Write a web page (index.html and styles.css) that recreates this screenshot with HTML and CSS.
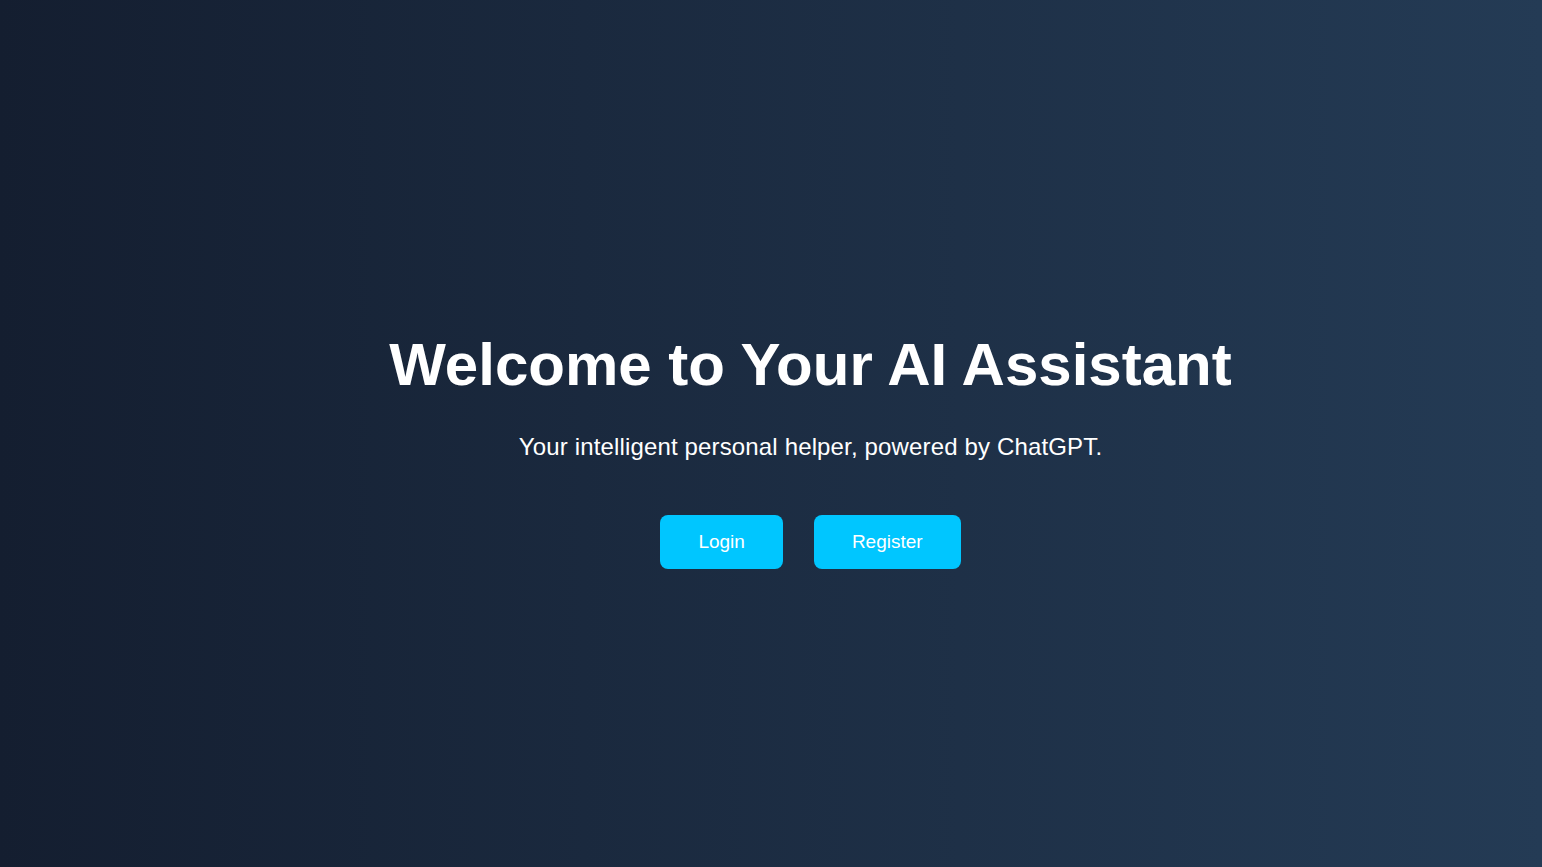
FILE: index.html
```html
<!DOCTYPE html>
<html lang="en">
<head>
<meta charset="utf-8">
<title>AI Assistant</title>
<link rel="stylesheet" href="styles.css">
</head>
<body>
<main class="hero">
  <h1 class="title">Welcome to Your AI Assistant</h1>
  <p class="subtitle">Your intelligent personal helper, powered by ChatGPT.</p>
  <div class="actions">
    <a class="btn" href="#">Login</a>
    <a class="btn" href="#">Register</a>
  </div>
</main>
</body>
</html>
```
FILE: styles.css
```css
html, body {
  margin: 0;
  height: 100%;
}
body {
  background: linear-gradient(to right, #141e30, #243b55);
  color: #ffffff;
  font-family: "Liberation Sans", Arial, sans-serif;
}
.hero {
  box-sizing: border-box;
  height: 100%;
  padding: 32px 0 0 79px;
  display: flex;
  flex-direction: column;
  align-items: center;
  justify-content: center;
  text-align: center;
}
.title {
  font-size: 60px;
  line-height: 70px;
  font-weight: bold;
  margin: 0 0 33px;
}
.subtitle {
  font-size: 24px;
  line-height: 28px;
  letter-spacing: 0.15px;
  margin: 0 0 54px;
}
.actions {
  display: flex;
  gap: 31px;
}
.btn {
  display: inline-block;
  background: #00c6ff;
  color: #fff;
  text-decoration: none;
  font-family: "Liberation Sans", Arial, sans-serif;
  font-size: 19px;
  line-height: 22px;
  padding: 16px 38px;
  border-radius: 8px;
}
```
